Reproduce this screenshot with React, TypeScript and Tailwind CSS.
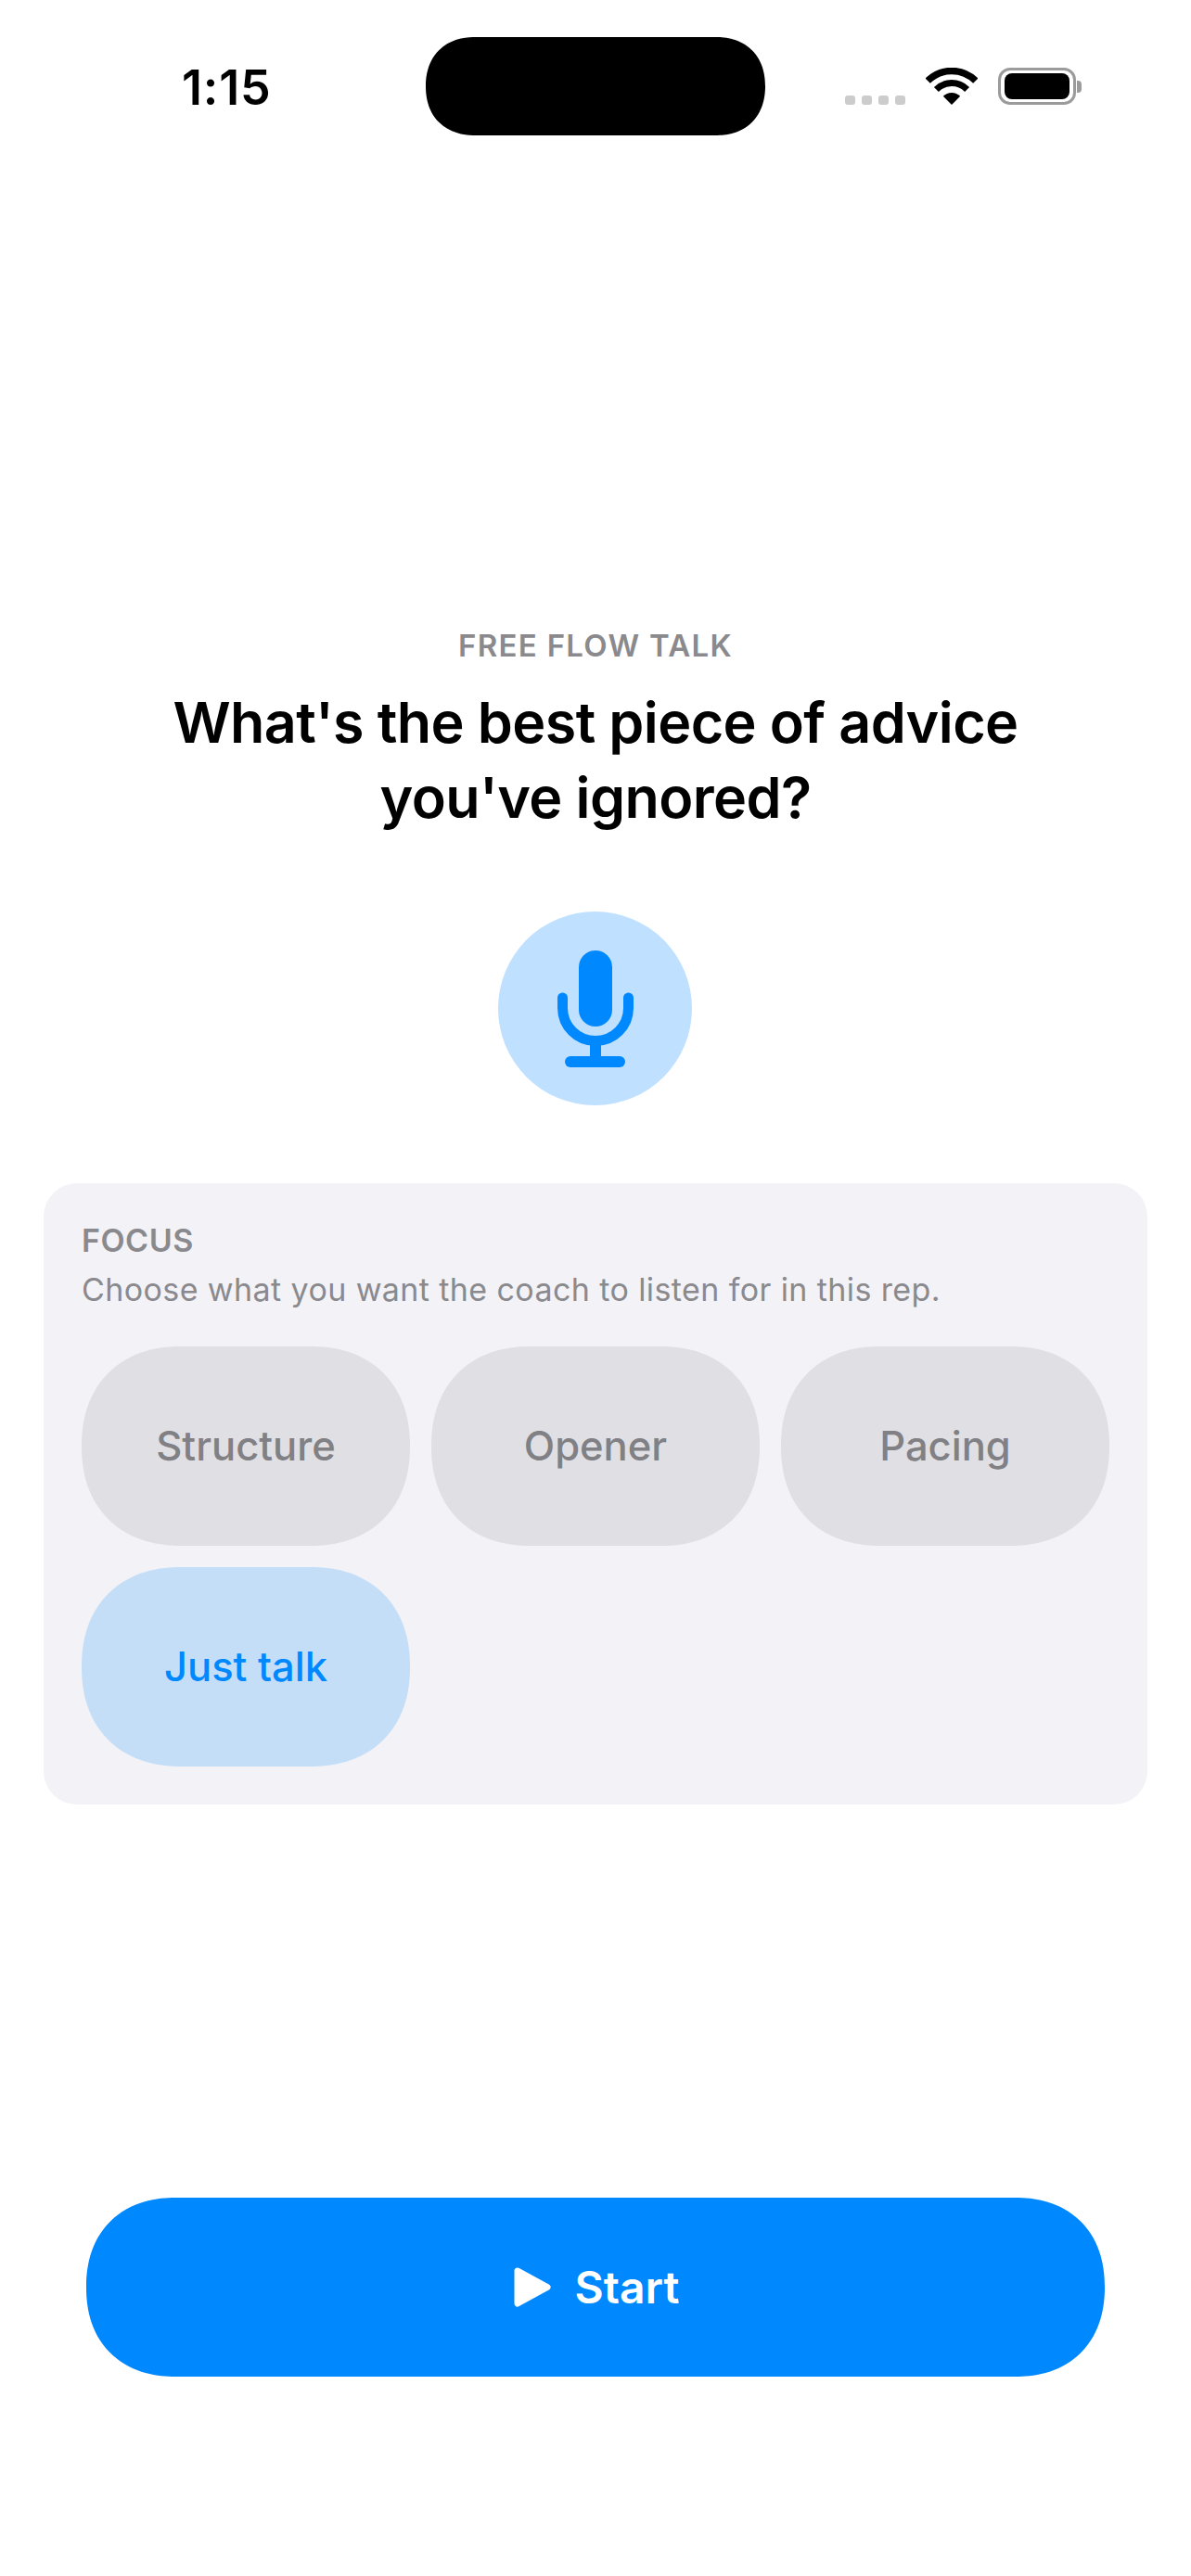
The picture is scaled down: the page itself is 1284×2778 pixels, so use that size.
const chips = [
  { label: 'Structure', selected: false },
  { label: 'Opener', selected: false },
  { label: 'Pacing', selected: false },
  { label: 'Just talk', selected: true },
];

const Wifi = () => (
  <svg width="56" height="40" viewBox="0 0 56 40" fill="none">
    <path d="M2.2 14.2 A36.5 36.5 0 0 1 53.8 14.2" stroke="#000" strokeWidth="7.5" />
    <path d="M11.4 23.4 A23.5 23.5 0 0 1 44.6 23.4" stroke="#000" strokeWidth="7" />
    <path d="M28 40 L18.8 30.8 A13 13 0 0 1 37.2 30.8 Z" fill="#000" />
  </svg>
);

const Battery = () => (
  <div className="flex items-center">
    <div className="flex h-[40px] w-[84px] items-center justify-center rounded-[13px] border-[3px] border-[#9b9b9b] bg-white">
      <div className="h-[28px] w-[70px] rounded-[8px] bg-black" />
    </div>
    <div className="ml-[1px] h-[13px] w-[5px] rounded-r-[4px] bg-[#9b9b9b]" />
  </div>
);

const Mic = () => (
  <svg width="82" height="126" viewBox="0 0 82 126" fill="none">
    <rect x="23" y="0" width="36" height="82" rx="18" fill="#0088ff" />
    <path
      d="M5.5 51 V62 A35.5 35.5 0 0 0 76.5 62 V51"
      stroke="#0088ff"
      strokeWidth="11"
      strokeLinecap="round"
    />
    <rect x="35" y="100" width="12" height="18" fill="#0088ff" />
    <rect x="8" y="114" width="65" height="12" rx="6" fill="#0088ff" />
  </svg>
);

const Play = () => (
  <svg width="41" height="43" viewBox="0 0 41 43">
    <path
      d="M4 4 L36 21.5 L4 39 Z"
      fill="#fff"
      stroke="#fff"
      strokeWidth="7"
      strokeLinejoin="round"
    />
  </svg>
);

export default function App() {
  return (
    <div
      className="flex h-[2778px] w-[1284px] flex-col bg-white"
      style={{ fontFamily: 'Inter, "Noto Sans", sans-serif' }}
    >
      {/* status bar */}
      <div className="flex pl-[196px] pt-[40px]">
        <div className="w-[263px] pt-[25px] text-[52px] leading-[60px] font-semibold tracking-[0.8px] text-black">
          1:15
        </div>
        <div className="h-[106px] w-[366px] rounded-[53px] bg-black [corner-shape:superellipse(1.15)]" />
        <div className="ml-[86px] mt-[33px] flex h-[40px] items-end">
          <div className="flex gap-[7px]">
            <div className="h-[10px] w-[11px] rounded-[3px] bg-[#cccccc]" />
            <div className="h-[10px] w-[11px] rounded-[3px] bg-[#cccccc]" />
            <div className="h-[10px] w-[11px] rounded-[3px] bg-[#cccccc]" />
            <div className="h-[10px] w-[11px] rounded-[3px] bg-[#cccccc]" />
          </div>
          <div className="ml-[22px]">
            <Wifi />
          </div>
          <div className="ml-[22px]">
            <Battery />
          </div>
        </div>
      </div>

      {/* prompt */}
      <div className="flex flex-col items-center pt-[530px]">
        <div className="text-[33px] leading-[40px] font-semibold tracking-[1.3px] text-[#8a8a8e]">
          FREE FLOW TALK
        </div>
        <h1 className="mt-[23px] text-center text-[61px] leading-[81px] font-semibold tracking-[-0.6px] text-black">
          What's the best piece of advice
          <br />
          you've ignored?
        </h1>
        <div className="mr-[1px] mt-[82px] flex h-[209px] w-[209px] items-center justify-center rounded-full bg-[#bfe0ff]">
          <Mic />
        </div>
      </div>

      {/* focus card */}
      <div className="ml-[47px] mt-[84px] w-[1190px] rounded-[36px] bg-[#f2f2f7] p-[41px]">
        <div className="mt-[1px] text-[34px] leading-[40px] font-semibold tracking-[0.5px] text-[#8a8a8e]">FOCUS</div>
        <div className="mt-[13px] text-[34px] leading-[40px] tracking-[0.4px] text-[#8a8a8e]">
          Choose what you want the coach to listen for in this rep.
        </div>
        <div className="mt-[41px] grid grid-cols-3 gap-[23px]">
          {chips.map((chip) =>
            chip.selected ? (
              <div
                key={chip.label}
                className="flex h-[215px] items-center justify-center rounded-[107px] bg-[#c4def8] text-[43.5px] font-medium text-[#0088ff] [corner-shape:superellipse(1.15)]"
              >
                {chip.label}
              </div>
            ) : (
              <div
                key={chip.label}
                className="flex h-[215px] items-center justify-center rounded-[107px] bg-[#dfdfe4] text-[43.5px] font-medium text-[#808085] [corner-shape:superellipse(1.15)]"
              >
                {chip.label}
              </div>
            ),
          )}
        </div>
      </div>

      {/* start */}
      <div className="ml-[93px] mt-[424px] flex h-[193px] w-[1098px] items-center justify-center gap-[25px] rounded-[96px] bg-[#0088ff] pl-[2px] text-white [corner-shape:superellipse(1.15)]">
        <Play />
        <span className="text-[48px] font-semibold">Start</span>
      </div>
    </div>
  );
}
